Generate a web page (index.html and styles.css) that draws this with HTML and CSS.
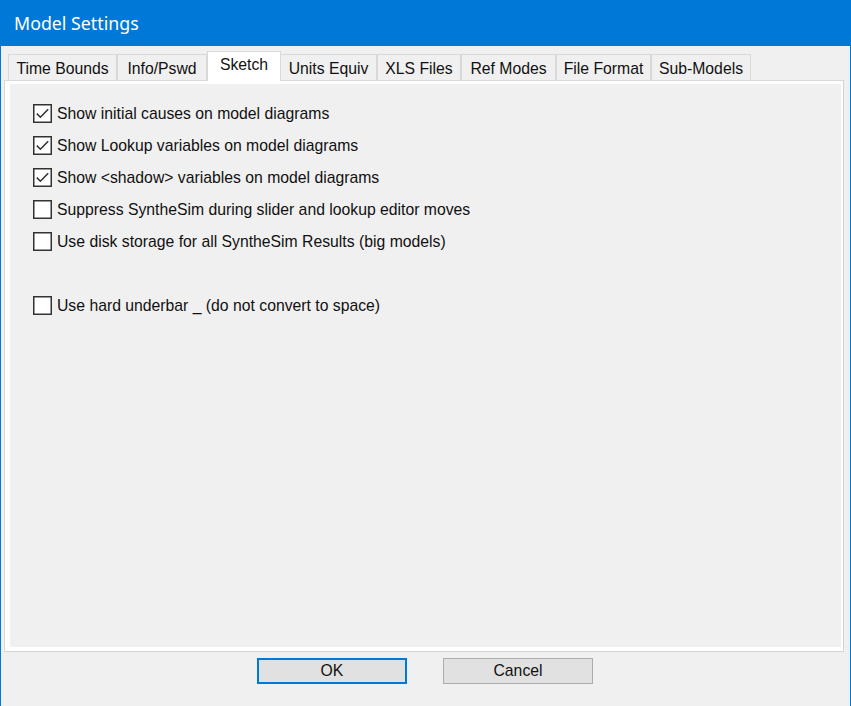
FILE: index.html
```html
<!DOCTYPE html>
<html>
<head>
<meta charset="utf-8">
<title>Model Settings</title>
<link rel="stylesheet" href="styles.css">
</head>
<body>
<div class="window">
  <div class="titlebar">Model Settings</div>
  <div class="content">
    <div class="tabs">
      <div class="tab w-tb">Time Bounds</div>
      <div class="tab w-info">Info/Pswd</div>
      <div class="tab active w-sketch">Sketch</div>
      <div class="tab w-units">Units Equiv</div>
      <div class="tab w-xls">XLS Files</div>
      <div class="tab w-ref">Ref Modes</div>
      <div class="tab w-file">File Format</div>
      <div class="tab w-sub">Sub-Models</div>
    </div>
    <div class="panel">
      <div class="page">
        <div class="row">
          <svg class="cb" width="19" height="19" viewBox="0 0 19 19"><rect x="0.75" y="0.75" width="17.5" height="17.5" fill="#fff" stroke="#333" stroke-width="1.5"/><polyline points="3.8,9.6 7.4,13.2 15.2,5.2" fill="none" stroke="#333" stroke-width="1.6"/></svg>
          <span class="label">Show initial causes on model diagrams</span>
        </div>
        <div class="row">
          <svg class="cb" width="19" height="19" viewBox="0 0 19 19"><rect x="0.75" y="0.75" width="17.5" height="17.5" fill="#fff" stroke="#333" stroke-width="1.5"/><polyline points="3.8,9.6 7.4,13.2 15.2,5.2" fill="none" stroke="#333" stroke-width="1.6"/></svg>
          <span class="label">Show Lookup variables on model diagrams</span>
        </div>
        <div class="row">
          <svg class="cb" width="19" height="19" viewBox="0 0 19 19"><rect x="0.75" y="0.75" width="17.5" height="17.5" fill="#fff" stroke="#333" stroke-width="1.5"/><polyline points="3.8,9.6 7.4,13.2 15.2,5.2" fill="none" stroke="#333" stroke-width="1.6"/></svg>
          <span class="label">Show &lt;shadow&gt; variables on model diagrams</span>
        </div>
        <div class="row">
          <svg class="cb" width="19" height="19" viewBox="0 0 19 19"><rect x="0.75" y="0.75" width="17.5" height="17.5" fill="#fff" stroke="#333" stroke-width="1.5"/></svg>
          <span class="label">Suppress SyntheSim during slider and lookup editor moves</span>
        </div>
        <div class="row">
          <svg class="cb" width="19" height="19" viewBox="0 0 19 19"><rect x="0.75" y="0.75" width="17.5" height="17.5" fill="#fff" stroke="#333" stroke-width="1.5"/></svg>
          <span class="label">Use disk storage for all SyntheSim Results (big models)</span>
        </div>
        <div class="spacer"></div>
        <div class="row">
          <svg class="cb" width="19" height="19" viewBox="0 0 19 19"><rect x="0.75" y="0.75" width="17.5" height="17.5" fill="#fff" stroke="#333" stroke-width="1.5"/></svg>
          <span class="label">Use hard underbar _ (do not convert to space)</span>
        </div>
      </div>
    </div>
    <div class="buttons">
      <div class="btn default">OK</div>
      <div class="btn">Cancel</div>
    </div>
  </div>
</div>
</body>
</html>
```
FILE: styles.css
```css
html, body {
  margin: 0;
  padding: 0;
  background: #f0f0f0;
}
.window {
  width: 851px;
  height: 706px;
  box-sizing: border-box;
  border-left: 1px solid #0078d7;
  border-right: 1px solid #0078d7;
  background: #f0f0f0;
  display: flex;
  flex-direction: column;
  font-family: "Liberation Sans", Arial, sans-serif;
  color: #111;
}
.titlebar {
  height: 46px;
  flex: none;
  background: #0078d7;
  color: #fff;
  font-family: "Noto Sans", "Open Sans", sans-serif;
  font-size: 17.8px;
  padding-left: 13px;
  display: flex;
  align-items: center;
  padding-bottom: 1px;
  box-sizing: border-box;
}
.content {
  flex: 1;
  display: flex;
  flex-direction: column;
  padding: 5px 6px 0 3px;
}
.tabs {
  display: flex;
  align-items: flex-end;
  height: 29px;
  padding-left: 4px;
  position: relative;
  z-index: 1;
}
.tab {
  box-sizing: border-box;
  height: 26px;
  border: 1px solid #d9d9d9;
  border-bottom: none;
  background: #f0f0f0;
  font-size: 15.75px;
  display: flex;
  align-items: center;
  justify-content: center;
  padding-top: 3px;
}
.tab.active {
  height: 30px;
  margin-bottom: -1px;
  background: #fff;
  padding-top: 0;
  padding-bottom: 4px;
  margin-right: -1px;
}
.w-tb { width: 109px; }
.w-info { width: 90px; }
.w-sketch { width: 74px; }
.w-units { width: 97px; }
.w-xls { width: 84px; }
.w-ref { width: 95px; }
.w-file { width: 95px; }
.w-sub { width: 100px; }
.panel {
  height: 572px;
  box-sizing: border-box;
  border: 1px solid #d9d9d9;
  border-right-color: #d4d4d4;
  border-bottom-color: #d4d4d4;
  background: #fff;
  padding: 3px 2px 4px 5px;
  display: flex;
}
.page {
  flex: 1;
  background: #f0f0f0;
  padding: 20px 0 0 23px;
}
.row {
  display: flex;
  height: 32px;
  align-items: flex-start;
}
.cb {
  display: block;
  flex: none;
}
.label {
  margin-left: 5px;
  font-size: 15.75px;
  line-height: 19px;
  white-space: nowrap;
}
.spacer {
  height: 32px;
}
.buttons {
  display: flex;
  justify-content: center;
  gap: 36px;
  margin-top: 6px;
  padding-left: 2px;
}
.btn {
  box-sizing: border-box;
  width: 150px;
  height: 26px;
  background: #e1e1e1;
  border: 1px solid #adadad;
  font-size: 15.75px;
  display: flex;
  align-items: center;
  justify-content: center;
}
.btn.default {
  border: 2px solid #0078d7;
}
```
